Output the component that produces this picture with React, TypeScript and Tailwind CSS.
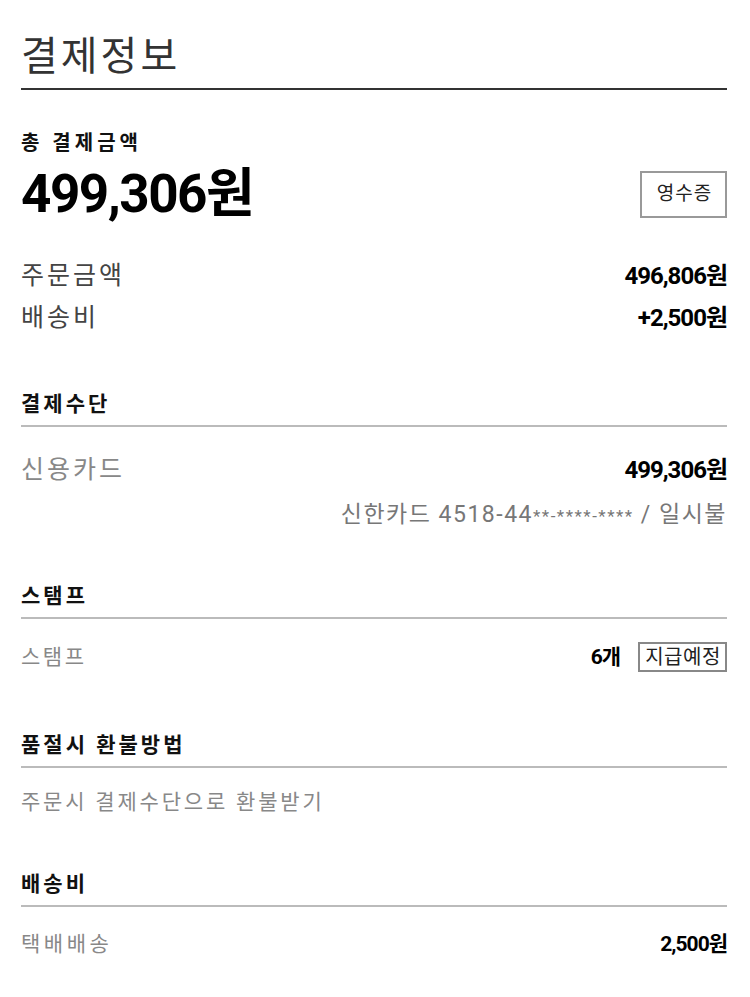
const FONT = { fontFamily: 'Roboto, "Noto Sans CJK KR", sans-serif' }

function SectionTitle({ children }: { children: React.ReactNode }) {
  return (
    <div className="border-b-2 border-[#bbbbbb] pb-[7px] text-[21px] font-bold leading-[28px] tracking-[3px] text-[#111]">
      {children}
    </div>
  )
}

export default function App() {
  return (
    <div className="min-h-[997px] bg-white pl-[21px] pr-[23px] pt-[31px] text-[#222]" style={FONT}>
      <h1 className="border-b-2 border-[#333] pb-[5px] text-[40px] font-normal leading-[52px] tracking-[3px] text-[#333]">
        결제정보
      </h1>

      <div className="pt-[41px]">
        <div className="text-[20px] font-bold leading-[24px] tracking-[4px] text-[#111]">총 결제금액</div>
        <div className="mt-[10px] flex items-center justify-between">
          <span className="text-[53px] font-bold leading-[58px] tracking-[-1.5px] text-black">499,306원</span>
          <button className="flex h-[47px] w-[87px] items-center justify-center border-2 border-[#999] pl-[2px] text-[19px] tracking-[1px] text-[#222]">
            영수증
          </button>
        </div>
      </div>

      <div className="mt-[36px] flex flex-col gap-[8px]">
        <div className="flex items-center justify-between leading-[34px]">
          <span className="text-[25px] tracking-[3px] text-[#444]">주문금액</span>
          <span className="text-[24px] font-bold tracking-[-1px] text-black">496,806원</span>
        </div>
        <div className="flex items-center justify-between leading-[34px]">
          <span className="text-[25px] tracking-[3px] text-[#444]">배송비</span>
          <span className="text-[24px] font-bold tracking-[-1px] text-black">+2,500원</span>
        </div>
      </div>

      <div className="mt-[55px]">
        <SectionTitle>결제수단</SectionTitle>
        <div className="mt-[26px] flex items-center justify-between leading-[34px]">
          <span className="text-[25px] tracking-[3px] text-[#888]">신용카드</span>
          <span className="text-[24px] font-bold tracking-[-1px] text-black">499,306원</span>
        </div>
        <div className="mt-[13px] text-right text-[23px] leading-[30px] tracking-[1.5px] text-[#777]">
          신한카드 4518-44<span className="text-[17px] tracking-[1.5px]">**-****-****</span> / 일시불
        </div>
      </div>

      <div className="mt-[51px]">
        <SectionTitle>스탬프</SectionTitle>
        <div className="mt-[23px] flex items-center justify-between leading-[30px]">
          <span className="text-[21px] tracking-[2.5px] text-[#888]">스탬프</span>
          <div className="flex items-center gap-[18px]">
            <span className="text-[21px] font-bold tracking-[-1px] text-black">6개</span>
            <span className="flex h-[30px] w-[89px] items-center justify-center border-2 border-[#888] pl-[1px] text-[20px] leading-none tracking-[0.5px] text-[#222]">
              지급예정
            </span>
          </div>
        </div>
      </div>

      <div className="mt-[59px]">
        <SectionTitle>품절시 환불방법</SectionTitle>
        <div className="mt-[19px] text-[21px] leading-[30px] tracking-[2.8px] text-[#888]">주문시 결제수단으로 환불받기</div>
      </div>

      <div className="mt-[53px]">
        <SectionTitle>배송비</SectionTitle>
        <div className="mt-[22px] flex items-center justify-between leading-[30px]">
          <span className="text-[21px] tracking-[3.5px] text-[#888]">택배배송</span>
          <span className="text-[21px] font-bold tracking-[-1px] text-black">2,500원</span>
        </div>
      </div>
    </div>
  )
}
